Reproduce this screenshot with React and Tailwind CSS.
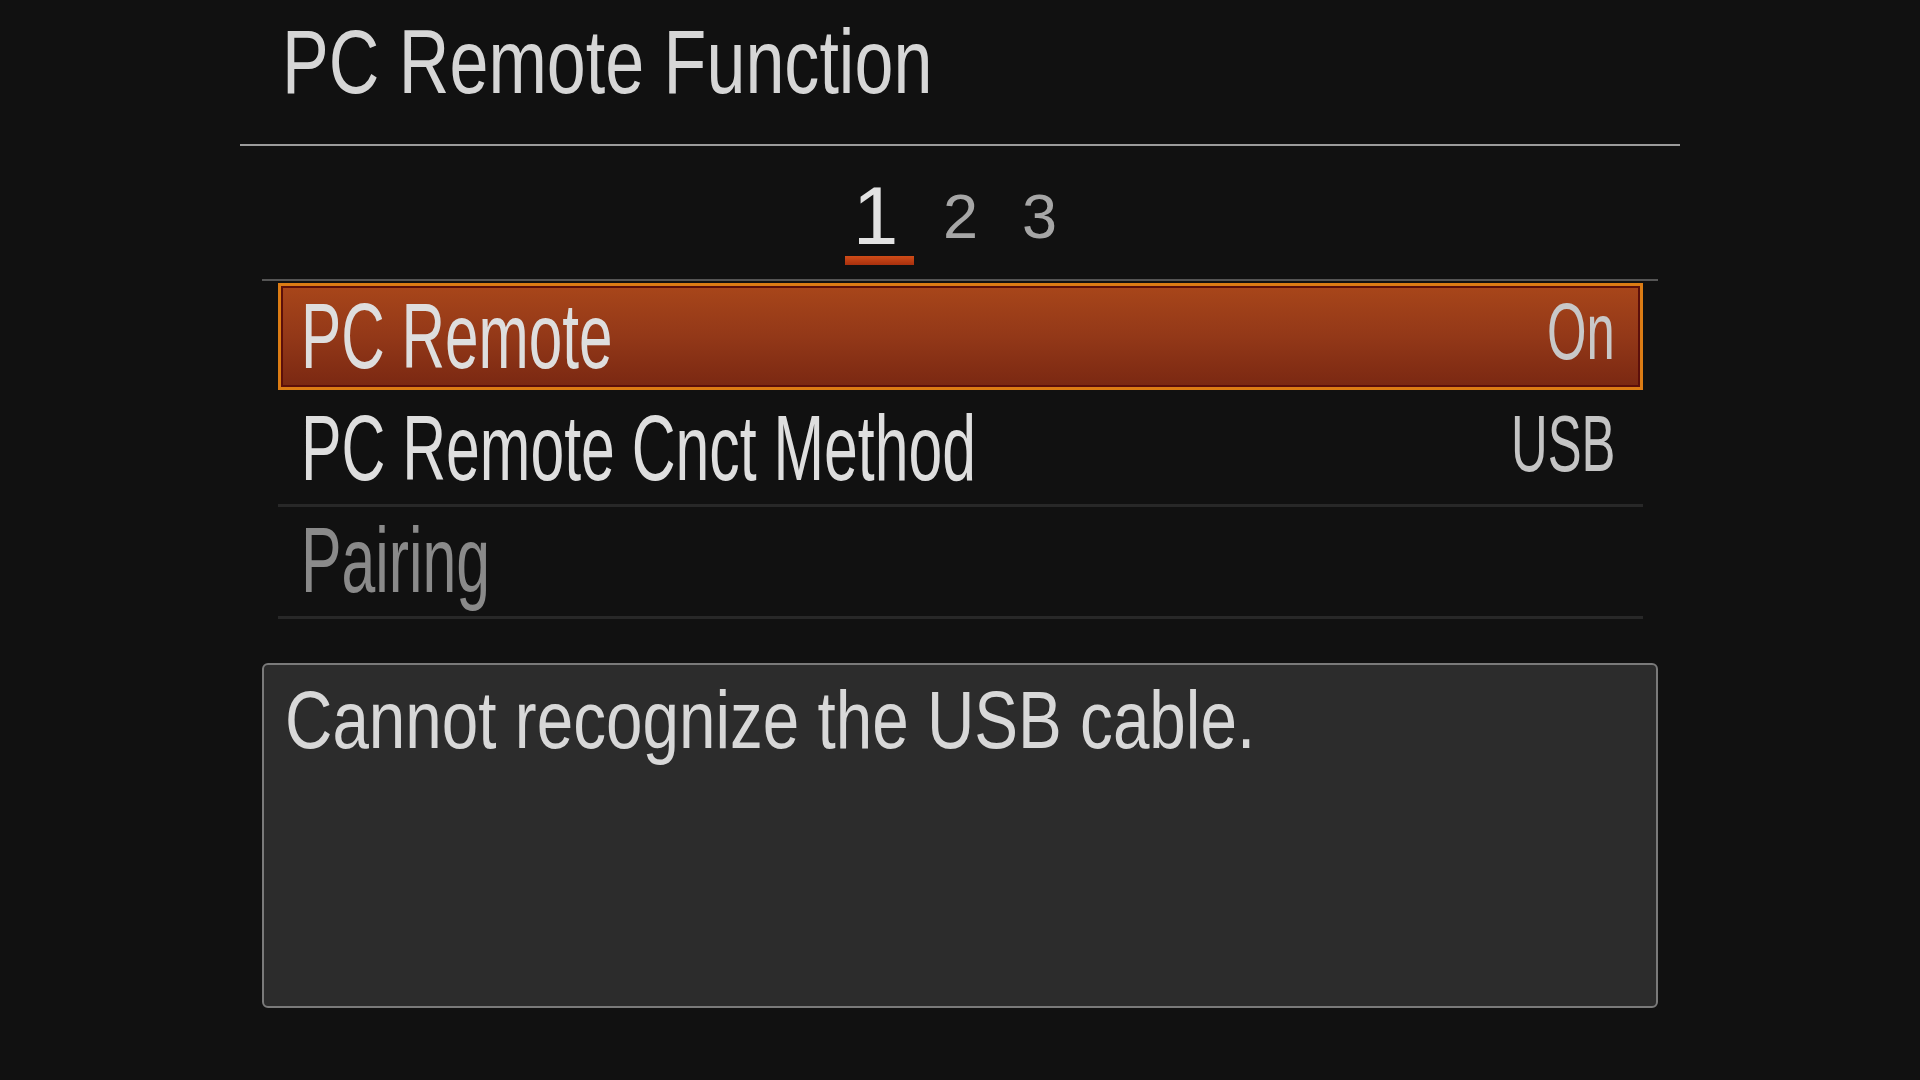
import React from "react";

const ROWS = [
  { label: "PC Remote", value: "On", selected: true },
  { label: "PC Remote Cnct Method", value: "USB" },
  { label: "Pairing", value: "", disabled: true },
];

const MenuRow = ({ label, value, selected, disabled }) => {
  if (selected) {
    return (
      <div className="h-[112px]">
        <div className="h-[107px] border-[3px] border-[#dc7c14] bg-gradient-to-b from-[#a8461a] via-[#933818] to-[#7a2812] shadow-[inset_0_0_0_2px_#5c0f0a] flex items-start justify-between pl-[20px] pr-[25px]">
          <span className="mt-[4px] inline-block origin-left scale-x-[0.655] text-[92px] leading-[92px] text-[#dedede] whitespace-nowrap">
            {label}
          </span>
          <span className="mt-[6px] inline-block origin-right scale-x-[0.635] text-[80px] leading-[80px] text-[#c8c8c8] whitespace-nowrap">
            {value}
          </span>
        </div>
      </div>
    );
  }

  return (
    <div className="h-[112px] border-b-[3px] border-[#282828] flex items-start justify-between pl-[23px] pr-[28px]">
      <span
        className={
          disabled
            ? "mt-[7px] inline-block origin-left scale-x-[0.66] text-[92px] leading-[92px] text-[#8a8a8a] whitespace-nowrap"
            : "mt-[7px] inline-block origin-left scale-x-[0.66] text-[92px] leading-[92px] text-[#dedede] whitespace-nowrap"
        }
      >
        {label}
      </span>
      {value && (
        <span className="mt-[9px] inline-block origin-right scale-x-[0.635] text-[80px] leading-[80px] text-[#c4c4c4] whitespace-nowrap">
          {value}
        </span>
      )}
    </div>
  );
};

export default function App() {
  return (
    <div className="w-full h-[1080px] bg-[#111111] overflow-hidden font-['Liberation_Sans',Arial,sans-serif]">
      {/* title */}
      <header className="ml-[240px] w-[1440px] h-[146px] border-b-2 border-[#9c9c9c] pt-[16px] pl-[42px]">
        <h1 className="inline-block origin-left scale-x-[0.77] text-[91px] leading-[91px] font-normal text-[#d6d6d6] whitespace-nowrap">
          PC Remote Function
        </h1>
      </header>

      <section className="ml-[262px] w-[1396px]">
        {/* page tabs */}
        <div className="h-[135px] border-b-2 border-[#555555] flex items-start pt-[29px]">
          <div className="ml-[583px] w-[69px] flex flex-col items-center">
            <span className="h-[81px] pr-[8px] text-[82px] leading-[82px] text-[#e2e2e2]">1</span>
            <div className="h-[9px] w-full bg-gradient-to-b from-[#d04c18] to-[#a8300e]" />
          </div>
          <span className="ml-[29px] mt-[10px] text-[63px] leading-[63px] text-[#a6a6a6]">2</span>
          <span className="ml-[44px] mt-[10px] text-[63px] leading-[63px] text-[#a6a6a6]">3</span>
        </div>

        {/* menu rows */}
        <div className="ml-[16px] w-[1365px] mt-[2px]">
          {ROWS.map((row) => (
            <MenuRow key={row.label} {...row} />
          ))}
        </div>

        {/* message box */}
        <div className="mt-[44px] h-[345px] rounded-[6px] border-2 border-[#7a7a7a] bg-[#2c2c2c] pt-[15px] pl-[21px]">
          <p className="inline-block origin-left scale-x-[0.81] text-[81px] leading-[81px] text-[#d8d8d8] whitespace-nowrap">
            Cannot recognize the USB cable.
          </p>
        </div>
      </section>
    </div>
  );
}
